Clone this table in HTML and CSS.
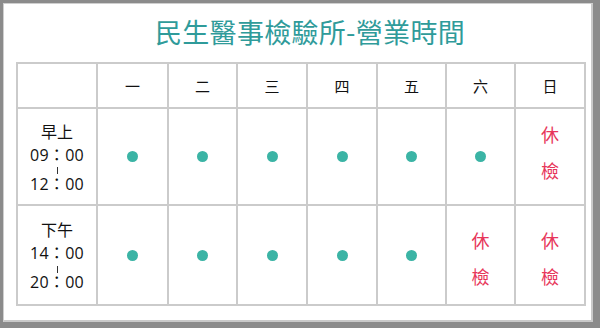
FILE: index.html
```html
<!DOCTYPE html>
<html lang="zh-Hant">
<head>
<meta charset="utf-8">
<link rel="stylesheet" href="styles.css">
</head>
<body>
<div class="frame">
  <h1 class="title">民生醫事檢驗所-營業時間</h1>
  <table class="hours">
    <colgroup>
      <col class="c-time"><col class="c1"><col class="c2"><col class="c3"><col class="c4"><col class="c5"><col class="c6"><col class="c7">
    </colgroup>
    <thead>
      <tr class="head">
        <th></th><th>一</th><th>二</th><th>三</th><th>四</th><th>五</th><th>六</th><th>日</th>
      </tr>
    </thead>
    <tbody>
      <tr class="row1">
        <td class="time">
          <div class="slot">
            <span class="label">早上</span>
            <span class="t1">09：00</span>
            <span class="bar"><i></i></span>
            <span class="t2">12：00</span>
          </div>
        </td>
        <td><span class="dot"></span></td>
        <td><span class="dot"></span></td>
        <td><span class="dot"></span></td>
        <td><span class="dot"></span></td>
        <td><span class="dot"></span></td>
        <td><span class="dot"></span></td>
        <td><span class="closed">休<br>檢</span></td>
      </tr>
      <tr class="row2">
        <td class="time">
          <div class="slot">
            <span class="label">下午</span>
            <span class="t1">14：00</span>
            <span class="bar"><i></i></span>
            <span class="t2">20：00</span>
          </div>
        </td>
        <td><span class="dot"></span></td>
        <td><span class="dot"></span></td>
        <td><span class="dot"></span></td>
        <td><span class="dot"></span></td>
        <td><span class="dot"></span></td>
        <td><span class="closed">休<br>檢</span></td>
        <td><span class="closed">休<br>檢</span></td>
      </tr>
    </tbody>
  </table>
</div>
</body>
</html>
```
FILE: styles.css
```css
html, body {
  margin: 0;
  padding: 0;
  background: #8b8b8b;
}
body {
  width: 600px;
  height: 328px;
  overflow: hidden;
  font-family: "Open Sans", "Noto Sans CJK TC", sans-serif;
  color: #222;
}
.frame {
  box-sizing: border-box;
  width: 600px;
  height: 328px;
  background: #fff;
  border-style: solid;
  border-color: #8b8b8b;
  border-width: 3px 7px 6px 3px;
  box-shadow: inset 1px 1px 0 #cfcfcf, inset -2px -2px 0 #c9c9c9;
  padding: 0 0 0 13px;
}
.title {
  margin: 0;
  height: 59px;
  line-height: 57px;
  padding-left: 10px;
  text-align: center;
  width: 568px;
  font-family: "Noto Sans CJK TC", sans-serif;
  font-weight: 400;
  font-size: 27px;
  color: #2f9b9a;
  letter-spacing: 0.3px;
}
.hours {
  border-collapse: collapse;
  table-layout: fixed;
  width: 568px;
}
.hours th, .hours td {
  border: 2px solid #cbcbcb;
  padding: 0;
  text-align: center;
  vertical-align: middle;
}
.c-time { width: 80px; }
.c1 { width: 71px; }
.c2 { width: 69px; }
.c3 { width: 70px; }
.c4 { width: 70px; }
.c5 { width: 69px; }
.c6 { width: 69px; }
.c7 { width: 70px; }
.head th {
  height: 43px;
  font-family: "Noto Sans CJK TC", sans-serif;
  font-weight: 400;
  font-size: 15px;
  color: #111;
}
.row1 td { height: 95px; }
.row2 td { height: 98px; }
.slot {
  display: flex;
  flex-direction: column;
  align-items: center;
  padding-bottom: 2px;
}
.label {
  font-family: "Noto Sans CJK TC", sans-serif;
  font-size: 16px;
  line-height: 24px;
  color: #111;
}
.t1, .t2 {
  font-family: "Open Sans", "Noto Sans CJK TC", sans-serif;
  font-size: 16px;
  color: #111;
  letter-spacing: 0.3px;
}
.t1 { line-height: 24px; }
.t2 { line-height: 18px; }
.bar {
  height: 8px;
  display: flex;
  align-items: center;
}
.bar i {
  display: block;
  width: 1px;
  height: 7px;
  background: #333;
}
.dot {
  display: block;
  margin: 0 auto;
  width: 11px;
  height: 11px;
  border-radius: 50%;
  background: #3bb4a5;
}
.closed {
  display: inline-block;
  font-family: "Noto Sans CJK TC", sans-serif;
  font-size: 18px;
  line-height: 36px;
  color: #e7365a;
}
.row1 .closed { margin-top: -9px; }
.row2 .closed { margin-top: 5px; }
```
